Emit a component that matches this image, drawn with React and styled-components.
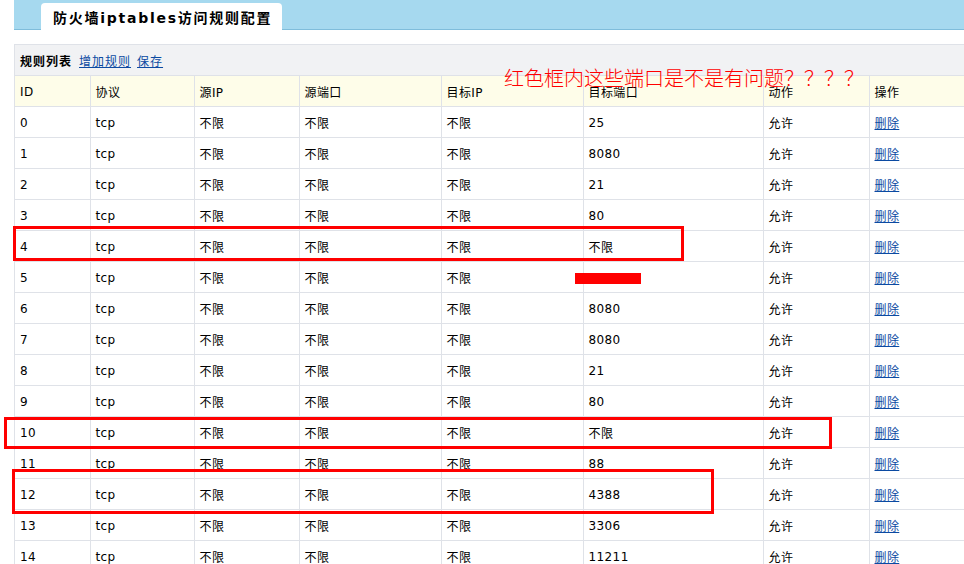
import React from "react";
import styled, { createGlobalStyle } from "styled-components";

const GlobalStyle = createGlobalStyle`
  html, body {
    margin: 0;
    padding: 0;
    background: #fff;
    overflow: hidden;
  }
  body {
    font-family: "DejaVu Sans", "Noto Sans CJK SC", sans-serif;
    font-size: 12px;
    color: #000;
  }
`;

const Page = styled.div`
  position: relative;
  width: 964px;
  height: 564px;
  padding-left: 14px;
  box-sizing: border-box;
  overflow: hidden;
`;

const TopBar = styled.div`
  height: 29px;
  background: #a6d9ef;
  border-bottom: 1px solid #7fbddb;
  display: flex;
  align-items: flex-end;
  padding-left: 27px;
  margin-right: -20px;
`;

const Tab = styled.div`
  height: 27px;
  margin-bottom: -1px;
  padding: 0 10px 0 12px;
  background: #fff;
  border-radius: 4px 4px 0 0;
  display: flex;
  align-items: center;
  font-size: 14px;
  font-weight: bold;
  letter-spacing: 1.75px;
`;

const Panel = styled.div`
  margin-top: 14px;
  width: 1000px;
  border-top: 1px solid #dfe2e8;
  border-left: 1px solid #dfe2e8;
`;

const Toolbar = styled.div`
  height: 30px;
  background: #f1f2f4;
  display: flex;
  align-items: center;
  gap: 6px;
  padding-left: 5px;
  padding-top: 1px;
  box-sizing: border-box;
  letter-spacing: 1px;
`;

const ToolTitle = styled.b`
  font-weight: bold;
  margin-right: 1px;
`;

const Link = styled.a`
  color: #0b4aa2;
  text-decoration: underline;
  cursor: pointer;
`;

const Table = styled.table`
  border-collapse: collapse;
  table-layout: fixed;
  width: 1000px;
  letter-spacing: 0.4px;
`;

const Cell = styled.td`
  height: 29px;
  padding: 1px 0 0 5px;
  border: 1px solid #dfe2e8;
  border-left: ${(p) => (p.first ? "none" : "1px solid #dfe2e8")};
  white-space: nowrap;
  vertical-align: middle;
`;

const HeadCell = styled(Cell).attrs({ as: "th" })`
  background: #fefde9;
  font-weight: normal;
  text-align: left;
`;

const Note = styled.div`
  position: absolute;
  left: 504px;
  top: 63px;
  color: #ff0000;
  font-family: "Noto Sans CJK SC", serif;
  font-size: 20px;
  font-weight: 300;
  white-space: nowrap;
`;

const Frame = styled.div`
  position: absolute;
  border: 3px solid #ff0000;
  box-sizing: border-box;
`;

const Redact = styled.div`
  position: absolute;
  left: 575px;
  top: 273px;
  width: 66px;
  height: 11px;
  background: #ff0000;
`;

const columns = [
  { title: "ID", width: 75 },
  { title: "协议", width: 104 },
  { title: "源IP", width: 105 },
  { title: "源端口", width: 142 },
  { title: "目标IP", width: 142 },
  { title: "目标端口", width: 180 },
  { title: "动作", width: 106 },
  { title: "操作", width: 146 },
];

const ports = ["25", "8080", "21", "80", "不限", "", "8080", "8080", "21", "80", "不限", "88", "4388", "3306", "11211", "80"];

export default function App() {
  return (
    <Page>
      <GlobalStyle />
      <TopBar>
        <Tab>防火墙iptables访问规则配置</Tab>
      </TopBar>
      <Panel>
        <Toolbar>
          <ToolTitle>规则列表</ToolTitle>
          <Link>增加规则</Link>
          <Link>保存</Link>
        </Toolbar>
        <Table>
          <colgroup>
            {columns.map((c) => (
              <col key={c.title} style={{ width: c.width }} />
            ))}
          </colgroup>
          <thead>
            <tr>
              {columns.map((c, i) => (
                <HeadCell key={c.title} first={i === 0}>
                  {c.title}
                </HeadCell>
              ))}
            </tr>
          </thead>
          <tbody>
            {ports.map((port, i) => (
              <tr key={i}>
                <Cell first>{i}</Cell>
                <Cell>tcp</Cell>
                <Cell>不限</Cell>
                <Cell>不限</Cell>
                <Cell>不限</Cell>
                <Cell>{port}</Cell>
                <Cell>允许</Cell>
                <Cell>
                  <Link>删除</Link>
                </Cell>
              </tr>
            ))}
          </tbody>
        </Table>
      </Panel>
      <Note>红色框内这些端口是不是有问题？？？？</Note>
      <Frame style={{ left: 13, top: 226, width: 671, height: 35 }} />
      <Redact />
      <Frame style={{ left: 4, top: 417, width: 828, height: 32 }} />
      <Frame style={{ left: 12, top: 469, width: 702, height: 45 }} />
    </Page>
  );
}
